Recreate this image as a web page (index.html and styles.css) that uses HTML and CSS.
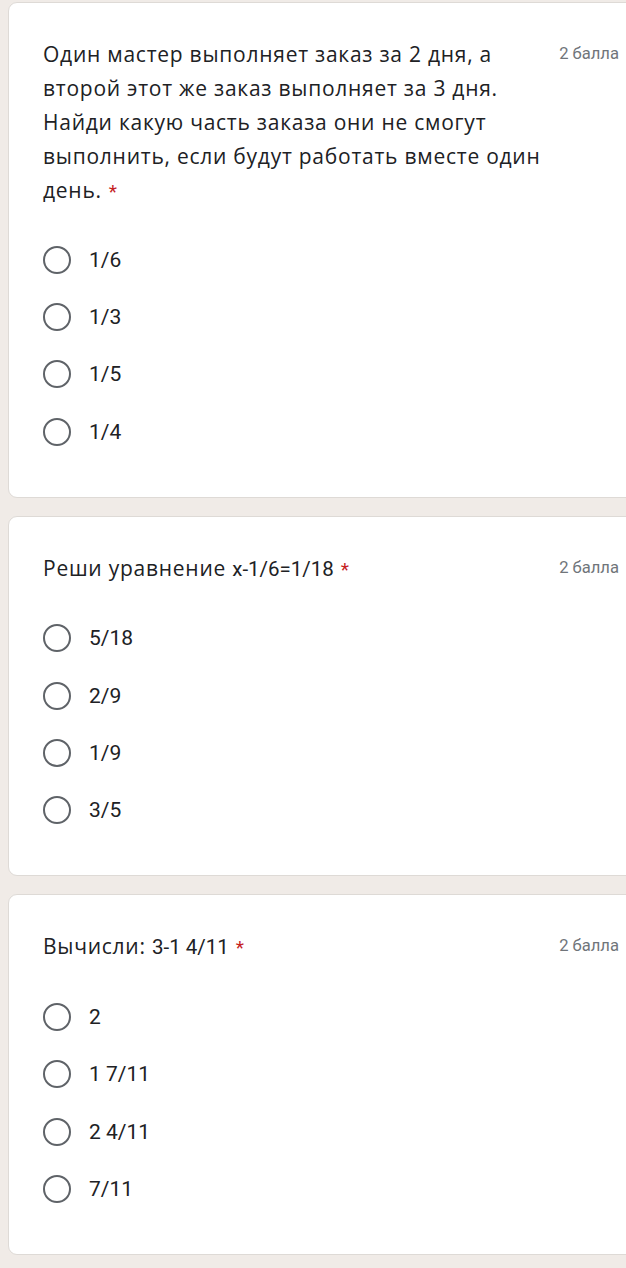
FILE: index.html
```html
<!DOCTYPE html>
<html lang="ru">
<head>
<meta charset="utf-8">
<link rel="stylesheet" href="styles.css">
</head>
<body>
<div class="page">
  <section class="card">
    <div class="head">
      <div class="title">Один мастер выполняет заказ за 2 дня, а второй этот же заказ выполняет за 3 дня. Найди какую часть заказа они не смогут выполнить, если будут работать вместе один день.<span class="req">*</span></div>
      <div class="points">2 балла</div>
    </div>
    <div class="options">
      <div class="opt"><span class="radio"></span><span class="label">1/6</span></div>
      <div class="opt"><span class="radio"></span><span class="label">1/3</span></div>
      <div class="opt"><span class="radio"></span><span class="label">1/5</span></div>
      <div class="opt"><span class="radio"></span><span class="label">1/4</span></div>
    </div>
  </section>
  <section class="card">
    <div class="head">
      <div class="title">Реши уравнение <span class="num">x-1/6=1/18</span><span class="req">*</span></div>
      <div class="points">2 балла</div>
    </div>
    <div class="options">
      <div class="opt"><span class="radio"></span><span class="label">5/18</span></div>
      <div class="opt"><span class="radio"></span><span class="label">2/9</span></div>
      <div class="opt"><span class="radio"></span><span class="label">1/9</span></div>
      <div class="opt"><span class="radio"></span><span class="label">3/5</span></div>
    </div>
  </section>
  <section class="card">
    <div class="head">
      <div class="title">Вычисли: <span class="num">3-1 4/11</span><span class="req">*</span></div>
      <div class="points">2 балла</div>
    </div>
    <div class="options">
      <div class="opt"><span class="radio"></span><span class="label">2</span></div>
      <div class="opt"><span class="radio"></span><span class="label">1 7/11</span></div>
      <div class="opt"><span class="radio"></span><span class="label">2 4/11</span></div>
      <div class="opt"><span class="radio"></span><span class="label">7/11</span></div>
    </div>
  </section>
</div>
</body>
</html>
```

FILE: styles.css
```css
html, body {
  margin: 0;
  padding: 0;
  background: #f0ebe7;
  overflow: hidden;
}
.page {
  padding: 2px 0 0 8px;
  display: flex;
  flex-direction: column;
  gap: 18px;
}
.card {
  width: 660px;
  box-sizing: border-box;
  background: #fff;
  border: 1px solid #dedad6;
  border-radius: 9px;
  padding: 34px 48px 36px 34px;
  font-family: Roboto, "Noto Sans", sans-serif;
  color: #202124;
}
.head {
  display: flex;
  align-items: flex-start;
}
.title {
  flex: 1;
  font-family: "Open Sans", sans-serif;
  font-size: 21px;
  letter-spacing: 0.75px;
  line-height: 34px;
  max-width: 515px;
}
.num {
  font-family: Roboto, sans-serif;
  font-size: 20.5px;
  letter-spacing: 0;
}
.req {
  color: #c5221f;
  font-family: Roboto, sans-serif;
  font-size: 19px;
  line-height: 0;
  margin-left: 7px;
}
.points {
  margin-left: auto;
  font-family: Roboto, sans-serif;
  font-size: 16.6px;
  line-height: 34px;
  color: #70757a;
}
.options {
  margin-top: 24px;
  display: flex;
  flex-direction: column;
}
.opt {
  height: 57.4px;
  display: flex;
  align-items: center;
}
.radio {
  width: 28px;
  height: 28px;
  box-sizing: border-box;
  border: 2px solid #5f6368;
  border-radius: 50%;
  flex: none;
}
.label {
  margin-left: 18px;
  font-size: 21px;
  color: #202124;
}
```
